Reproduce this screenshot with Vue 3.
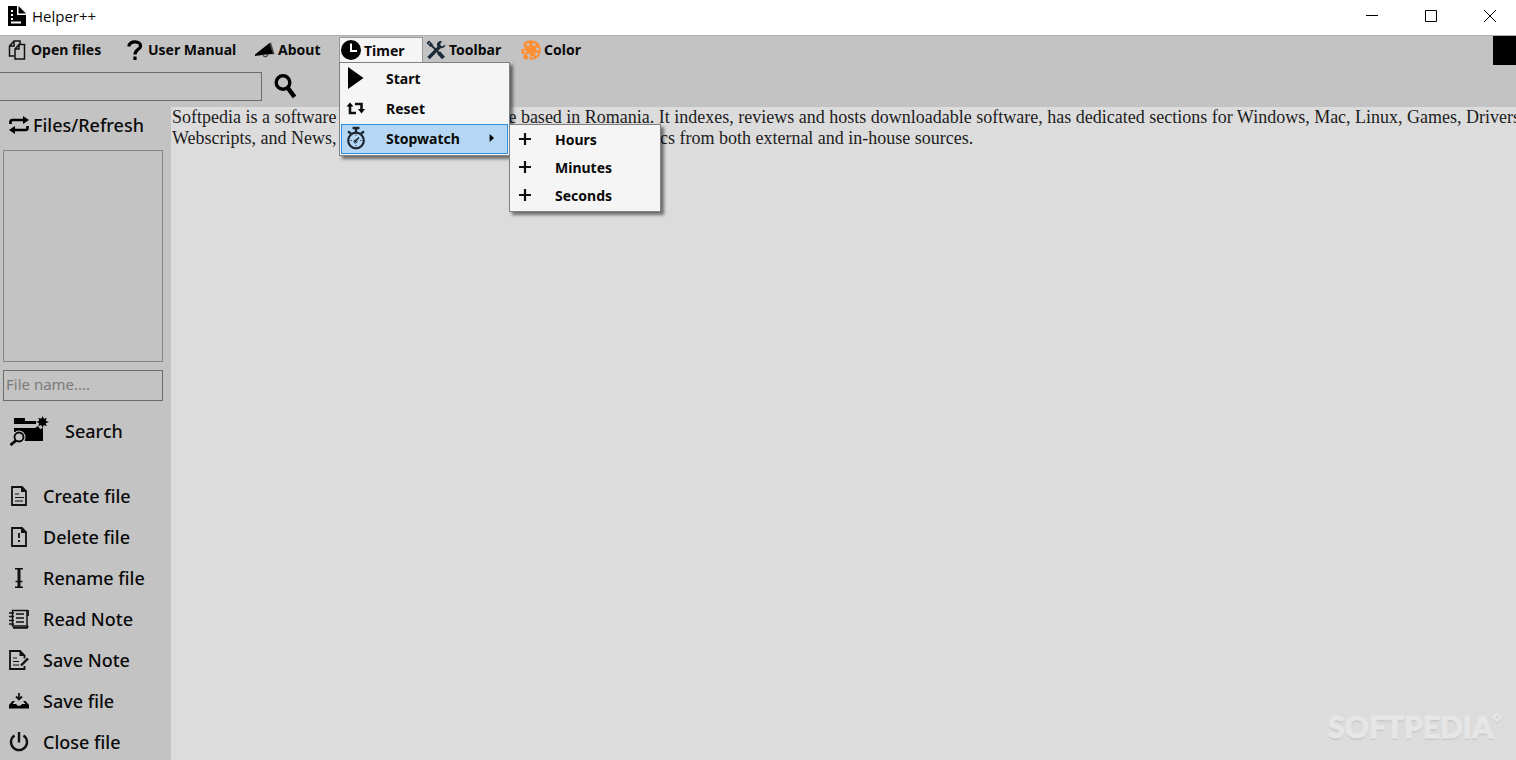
<script setup>
import { ref } from 'vue'

const query = ref('')
const fileName = ref('')
const note = ref(
  'Softpedia is a software and a tech-news website based in Romania. It indexes, reviews and hosts downloadable software, has dedicated sections for Windows, Mac, Linux, Games, Drivers, Mobile,\n' +
    'Webscripts, and News, reports news on technology and science topics from both external and in-house sources.',
)

const fileActions = [
  { id: 'create', label: 'Create file' },
  { id: 'delete', label: 'Delete file' },
  { id: 'rename', label: 'Rename file' },
  { id: 'read', label: 'Read Note' },
  { id: 'note', label: 'Save Note' },
  { id: 'save', label: 'Save file' },
  { id: 'close', label: 'Close file' },
]

const units = ['Hours', 'Minutes', 'Seconds']
</script>

<template>
  <div class="window">
    <header class="titlebar">
      <svg class="logo" viewBox="0 0 18 20">
        <path d="M0 0h9v9h9v11H0z" />
        <path d="M10.500 0L18 7.500h-7.500z" />
        <path
          d="M3 4h2v2H3zM3 8h2v2H3zM3 12h2v2H3zM3 15.500h10v2H3z"
          fill="#fff"
        />
      </svg>
      <span class="app-name">Helper++</span>
      <div class="controls">
        <button aria-label="Minimize">
          <svg viewBox="0 0 12 12"><path d="M0 5.500h12" /></svg>
        </button>
        <button aria-label="Maximize">
          <svg viewBox="0 0 12 12"><path d="M.5.5h11v11H.5z" /></svg>
        </button>
        <button aria-label="Close">
          <svg viewBox="0 0 12 12"><path d="M0 0l12 12M12 0L0 12" /></svg>
        </button>
      </div>
    </header>

    <div class="toolbar">
      <nav class="menubar">
        <button class="menu-btn">
          <svg viewBox="0 0 20 20" fill="none" stroke="#111" stroke-width="1.500">
            <path d="M6 16H1.500V6L6 1h6v3.500M6 1v5H1.500" />
            <path d="M7 9L11 4.500h5.500V19H7zM11 4.500V9H7" />
          </svg>
          Open files
        </button>
        <button class="menu-btn">
          <svg viewBox="0 0 20 20" fill="none" stroke="#000" stroke-width="3.200">
            <path d="M4 6.500C4 0 16.500.5 15.500 6.500 15 9.500 10 9.500 10 14.500" />
            <path d="M10 16.500V20" />
          </svg>
          User Manual
        </button>
        <button class="menu-btn">
          <svg viewBox="0 0 20 20">
            <path d="M0 14.500L14.500 3l4 11-8 .500L0 16z" />
            <path d="M14.500 3l1.500-.5L19.500 14l-1.500.5z" fill="#444" />
            <path
              d="M8 14.500c.5 3 4.500 3 5-.5"
              fill="none"
              stroke="#444"
              stroke-width="1.200"
            />
          </svg>
          About
        </button>
        <div class="menu-wrap">
          <button class="menu-btn open" aria-expanded="true">
            <svg viewBox="0 0 20 20">
              <circle cx="10" cy="10" r="10" />
              <path
                d="M10 3.500V11h6"
                fill="none"
                stroke="#fff"
                stroke-width="2"
              />
            </svg>
            Timer
          </button>
          <div class="menu" role="menu">
            <button class="item" role="menuitem">
              <svg viewBox="0 0 20 22"><path d="M2 0l15.500 11L2 22z" /></svg>
              Start
            </button>
            <button class="item" role="menuitem">
              <svg viewBox="0 0 20 20">
                <path
                  d="M4 7v8h6M9 6h6.500V12"
                  fill="none"
                  stroke="#111"
                  stroke-width="2.600"
                />
                <path d="M.5 8.500L4 4.500l3.500 4zM12 11h7L15.500 15.500z" />
              </svg>
              Reset
            </button>
            <button class="item active" role="menuitem" aria-expanded="true">
              <svg class="watch" viewBox="0 0 20 24" fill="none" stroke="#1a2530">
                <circle cx="10" cy="14.500" r="7.800" stroke-width="2.200" />
                <path d="M6.500 2h7M10 2v5M2 5.500l3 2M18 5.500l-3 2" stroke-width="2.400" />
                <path d="M8.500 16L13 11.500" stroke-width="1.600" />
                <circle cx="9.500" cy="15.500" r="1.500" stroke-width="1" />
                <path
                  d="M10 8.500v1.200M4.500 14.500h1.200M15.500 14.500h-1.200M10 20v-1"
                  stroke-width="1"
                />
              </svg>
              Stopwatch
              <svg class="arrow" viewBox="0 0 6 10">
                <path d="M0 0l5.500 5L0 10z" />
              </svg>
            </button>
            <div class="menu submenu" role="menu">
              <button
                v-for="unit in units"
                :key="unit"
                class="item"
                role="menuitem"
              >
                <svg viewBox="0 0 20 20">
                  <path d="M4 10h12M10 4v12" stroke="#111" stroke-width="2.200" />
                </svg>
                {{ unit }}
              </button>
            </div>
          </div>
        </div>
        <button class="menu-btn">
          <svg viewBox="0 0 20 20" fill="none" stroke="#1c2a38">
            <path d="M4 4l9 9" stroke-width="2" />
            <path d="M12.500 12.500l5 5.500" stroke-width="4" />
            <path d="M1.500 3L3 1.500l3 3L4.500 6z" stroke-width="1.500" />
            <path d="M2.500 18L14 6.500" stroke-width="3.200" />
            <path
              d="M19.500 4.500l-3.500 2-2-2L16 1c-4-.5-6 2.500-4.500 5.500 2 3 8 2 8-2z"
              fill="#1c2a38"
              stroke="none"
            />
          </svg>
          Toolbar
        </button>
        <button class="menu-btn">
          <svg viewBox="0 0 20 20">
            <path
              d="M2.500 3.500C6-1 15-1 18.500 5c3 5.500.5 13-6 14.500C9 20.500 7.500 19 9 16.500c1-2-.5-3-2.500-2.500-4 1.500-6.500 0-6.500-3 0-1.500 1-2 3-2 1.500-.5 1-2 0-3-.8-.8-1-1.500-.5-2.500z"
              fill="#ff8f33"
            />
            <g fill="#c3c3c3">
              <circle cx="7" cy="4.500" r="1.500" />
              <circle cx="13" cy="4.500" r="1.500" />
              <circle cx="16.500" cy="9" r="1.500" />
              <circle cx="15.500" cy="14" r="1.500" />
              <circle cx="4" cy="11.500" r="1.200" />
              <circle cx="11.500" cy="17" r="1.100" />
            </g>
            <path d="M2 15.500c2-1 4-1 5 .5s0 3.500-2 3.500-3.500-1.500-3-4z" fill="#ff8f33" />
          </svg>
          Color
        </button>
        <button class="swatch" aria-label="Current color"></button>
      </nav>

      <form class="find" @submit.prevent>
        <input v-model="query" type="text" aria-label="Find in text" />
        <button aria-label="Find">
          <svg viewBox="0 0 22 25" fill="none" stroke="#000">
            <circle cx="9" cy="8.500" r="6.800" stroke-width="3.400" />
            <path d="M13.500 13.500l7 9.500" stroke-width="4.500" />
          </svg>
        </button>
      </form>
    </div>

    <main class="body">
      <aside class="sidebar">
        <button class="refresh">
          <svg viewBox="0 0 20 18">
            <path
              d="M1.500 8V6q0-2 2-2H15M18.500 10v2q0 2-2 2H5"
              fill="none"
              stroke="#000"
              stroke-width="2.600"
            />
            <path d="M14 0l6 4-6 4zM6 10l-6 4 6 4z" />
          </svg>
          Files/Refresh
        </button>
        <div class="file-list" role="listbox" aria-label="Files"></div>
        <input
          v-model="fileName"
          class="file-name"
          type="text"
          placeholder="File name...."
          aria-label="File name"
        />
        <button class="search">
          <svg viewBox="0 0 40 30">
            <path d="M5 2h11v3h11v3H5zM5 12h21l3-2 2 3 3-1v13H16l-4-9H5z" />
            <path
              d="M33.500 0l1.300 3 3-1.200-1.200 3 3.400 1.200-3.400 1.300 1.200 3-3-1.300-1.300 3-1.300-3-3 1.300 1.200-3L27 6l3.400-1.200-1.200-3 3 1.200z"
            />
            <circle cx="33.500" cy="5.800" r="3.500" />
            <circle cx="10" cy="21" r="6.500" fill="#c3c3c3" />
            <circle
              cx="10"
              cy="21"
              r="4.500"
              fill="none"
              stroke="#000"
              stroke-width="1.800"
            />
            <path d="M7 24.500L1.500 29" stroke="#000" stroke-width="2.800" />
          </svg>
          Search
        </button>

        <ul class="actions">
          <li v-for="action in fileActions" :key="action.id">
            <button>
              <svg
                viewBox="0 0 20 20"
                fill="none"
                stroke="#111"
                stroke-width="1.800"
              >
                <template v-if="action.id === 'create'">
                  <path d="M3 1h10l4 4v14H3z" />
                  <path d="M12 0l6 6h-6z" fill="#111" stroke="none" />
                  <path d="M6 8h4M6 11.500h9M6 15h8" stroke-width="1.200" />
                </template>
                <template v-else-if="action.id === 'delete'">
                  <path d="M3 1h10l4 4v14H3z" />
                  <path d="M12 0l6 6h-6z" fill="#111" stroke="none" />
                  <path d="M10 6v5M10 13v2" />
                </template>
                <template v-else-if="action.id === 'rename'">
                  <path d="M10 1v18" stroke-width="3" />
                  <path d="M6 .8h8M6 19.200h8M6.500 13.500h7" stroke-width="1.400" />
                </template>
                <template v-else-if="action.id === 'read'">
                  <path d="M3.500 1.500H18v15.500H3.500z" stroke-width="1.500" />
                  <path d="M19 1v6M4 18.800h14l1-2" stroke-width="1.800" />
                  <path
                    d="M7 5h8M7 9h8M7 13h8M0 4h5M0 7.500h5M0 11.500h5M0 15h5"
                    stroke-width="1.300"
                  />
                </template>
                <template v-else-if="action.id === 'note'">
                  <path d="M15.500 16v3H1V1h10l4.500 4.500v3" />
                  <path d="M10.500 0l6 6h-6z" fill="#111" stroke="none" />
                  <path d="M4 8h4M4 11.500h6M4 15h6" stroke-width="1.200" />
                  <path d="M12 15.500L19 8.500" stroke-width="2.400" />
                </template>
                <template v-else-if="action.id === 'save'">
                  <path d="M10 2v6M7 5.500l3 3 3-3" />
                  <path
                    d="M3.500 10H6l-2.500 3H7q3 4 6 0h3.500L14 10h2.500l3.500 4v3.500H0V14z"
                    fill="#000"
                    stroke="none"
                  />
                </template>
                <template v-else>
                  <path d="M5.500 3.500a8 8 0 1 0 9 0M10 0v10.500" stroke-width="2.400" />
                </template>
              </svg>
              {{ action.label }}
            </button>
          </li>
        </ul>
      </aside>

      <textarea
        v-model="note"
        class="editor"
        wrap="off"
        spellcheck="false"
        aria-label="Note text"
      ></textarea>
      <div class="watermark">SOFTPEDIA<span>◇</span></div>
    </main>
  </div>
</template>

<style>
body {
  margin: 0;
  overflow: hidden;
}
</style>

<style scoped>
.window {
  display: flex;
  flex-direction: column;
  height: 100vh;
  background: #c3c3c3;
  color: #0a0a0a;
  font-family: 'Noto Sans', 'Open Sans', sans-serif;
}

button {
  display: flex;
  align-items: center;
  padding: 0;
  border: 0;
  background: none;
  color: inherit;
  font: inherit;
  white-space: nowrap;
}

button svg {
  flex: none;
}

input {
  box-sizing: border-box;
  border: 1px solid #6c6c6c;
  background: transparent;
  font: inherit;
  outline: 0;
}

.titlebar {
  display: flex;
  align-items: center;
  height: 35px;
  flex: none;
  padding: 0 0 4px 8px;
  background: #fff;
  box-sizing: border-box;
}

.logo {
  width: 18px;
  height: 20px;
  margin-right: 6px;
}

.app-name {
  font-family: 'Open Sans', sans-serif;
  font-size: 15px;
}

.controls {
  display: flex;
  align-self: stretch;
  gap: 7px;
  margin-left: auto;
}

.controls button {
  justify-content: center;
  width: 52px;
}

.controls svg {
  width: 12px;
  height: 12px;
  fill: none;
  stroke: #000;
}

.toolbar {
  box-sizing: border-box;
  flex: none;
  height: 72px;
  border-top: 1px solid #acacac;
}

.menubar {
  display: grid;
  grid-template-columns: 117px 130px 84px 87px 95px 90px 1fr;
  height: 27px;
  padding-left: 8px;
  font-size: 14px;
  font-weight: 700;
}

.menu-btn {
  gap: 3px;
  height: 27px;
}

.menu-btn svg {
  width: 20px;
  height: 20px;
}

.swatch {
  justify-self: end;
  width: 23px;
  height: 29px;
  background: #000;
}

.menu-wrap {
  position: relative;
}

.menu-btn.open {
  box-sizing: border-box;
  width: 84px;
  height: 25px;
  margin-top: 1px;
  padding-left: 1px;
  border: 1px solid #999;
  border-bottom: 0;
  background: #f5f5f5;
}

.menu {
  position: absolute;
  z-index: 2;
  top: 26px;
  left: 0;
  box-sizing: border-box;
  width: 171px;
  padding: 1px;
  border: 1px solid #808080;
  background: #f5f5f5;
  box-shadow: 3px 3px 3px rgba(0, 0, 0, 0.5);
}

.item {
  box-sizing: border-box;
  width: 100%;
  height: 30px;
  padding: 0 12px 2px 4px;
  border: 1px solid transparent;
}

.item svg {
  width: 20px;
  height: 22px;
  margin-right: 20px;
}

.item .watch {
  height: 24px;
}

.item.active {
  border-color: #2b90e6;
  background: #b5d7f3;
}

.item .arrow {
  width: 6px;
  height: 8px;
  margin: 0 0 0 auto;
}

.submenu {
  top: 61px;
  left: 169px;
  width: 152px;
}

.submenu .item {
  height: 28px;
  padding-left: 3px;
}

.find {
  display: flex;
  align-items: center;
  gap: 12px;
  margin-top: 9px;
}

.find input {
  width: 262px;
  height: 29px;
  border-left: 0;
  font-size: 15px;
}

.find svg {
  width: 22px;
  height: 25px;
}

.body {
  position: relative;
  display: flex;
  flex: 1;
  min-height: 0;
}

.sidebar {
  box-sizing: border-box;
  width: 171px;
  flex: none;
  padding: 0 8px 0 3px;
  font-size: 18px;
  font-weight: 500;
}

.refresh {
  gap: 4px;
  height: 36px;
  padding-left: 6px;
}

.refresh svg {
  width: 20px;
  height: 18px;
}

.file-list {
  box-sizing: border-box;
  height: 212px;
  margin-top: 7px;
  border: 1px solid #858585;
}

.file-name {
  display: block;
  width: 100%;
  height: 31px;
  margin-top: 8px;
  padding: 0 2px 3px;
  font-size: 15px;
  font-weight: 400;
}

.file-name::placeholder {
  color: #7b7b7b;
}

.search {
  gap: 16px;
  height: 60px;
  padding-left: 6px;
}

.search svg {
  width: 40px;
  height: 30px;
}

.actions {
  margin: 14px 0 0;
  padding: 0;
  list-style: none;
}

.actions button {
  gap: 14px;
  height: 41px;
  padding-left: 6px;
}

.actions svg {
  width: 20px;
  height: 20px;
}

.editor {
  flex: 1;
  min-width: 0;
  padding: 0 1px;
  border: 0;
  outline: 0;
  overflow: hidden;
  resize: none;
  background: #dcdcdc;
  color: #1c1c1c;
  font: 18px/21px 'Liberation Serif', serif;
}

.watermark {
  position: absolute;
  right: 15px;
  bottom: 14px;
  color: #e6e6e6;
  font: 900 30px/40px Lato, sans-serif;
  -webkit-text-stroke: 1px #e6e6e6;
  text-shadow: 0 2px 1px #c8c8c8;
  pointer-events: none;
}

.watermark span {
  font-size: 10px;
  vertical-align: top;
  line-height: 20px;
}
</style>
